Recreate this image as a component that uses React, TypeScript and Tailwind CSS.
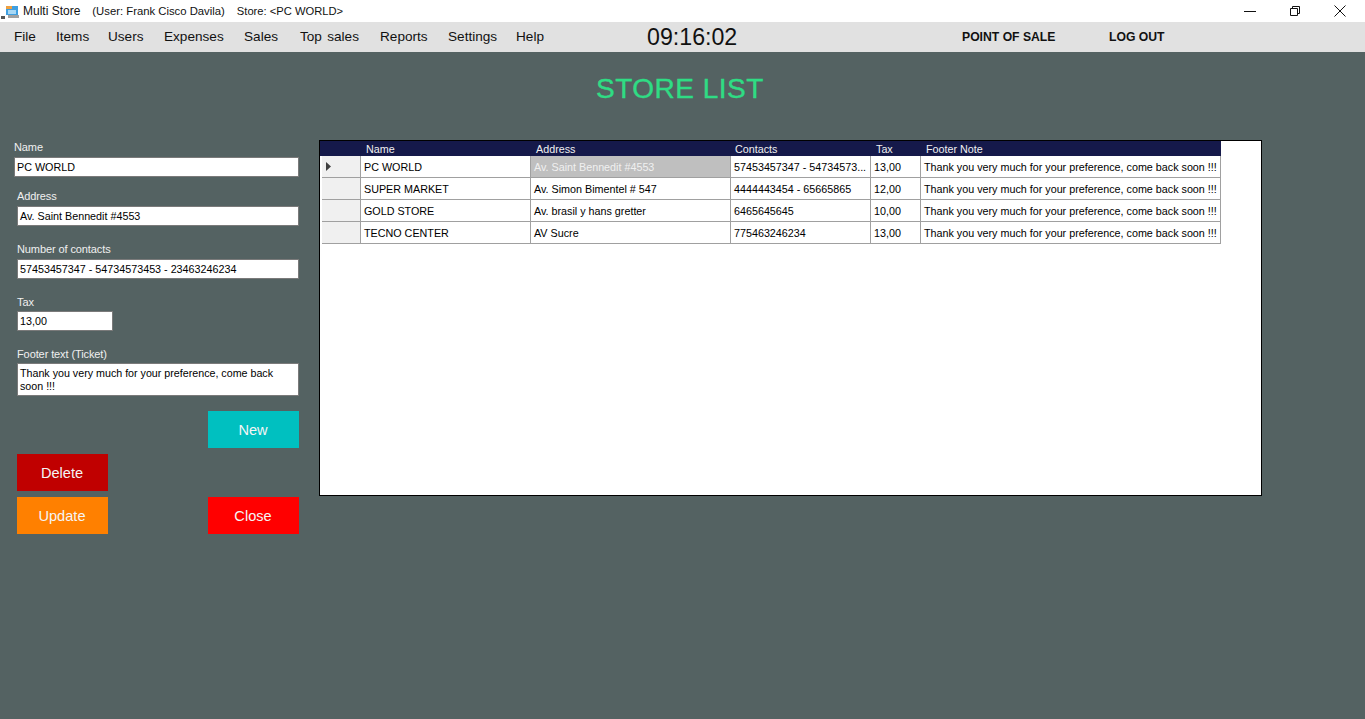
import React from "react";

const menus = [
  { label: "File", w: "w-[42px]" },
  { label: "Items", w: "w-[52px]" },
  { label: "Users", w: "w-[56px]" },
  { label: "Expenses", w: "w-[80px]" },
  { label: "Sales", w: "w-[56px]" },
  { label: "Top sales", w: "w-[80px] [word-spacing:1.5px]" },
  { label: "Reports", w: "w-[68px]" },
  { label: "Settings", w: "w-[68px]" },
  { label: "Help", w: "w-[32px]" },
];

const note = "Thank you very much for your preference, come back soon !!!";

const stores = [
  { name: "PC WORLD", address: "Av. Saint Bennedit #4553", contacts: "57453457347 - 54734573...", tax: "13,00" },
  { name: "SUPER MARKET", address: "Av. Simon Bimentel # 547", contacts: "4444443454 - 65665865", tax: "12,00" },
  { name: "GOLD STORE", address: "Av. brasil y hans gretter", contacts: "6465645645", tax: "10,00" },
  { name: "TECNO CENTER", address: "AV Sucre", contacts: "775463246234", tax: "13,00" },
];

// every grid cell draws its own bottom and right line
const cell = "border-r border-b border-[#a0a0a0] pl-[3px]";

function Field({ label, value, className, box = "", gap = "mt-[2px]" }: { label: string; value: string; className: string; box?: string; gap?: string }) {
  return (
    <div className={className}>
      <div className="h-[15px] text-[11px] leading-[15px] tracking-[-0.1px] text-[#f0f0f0]">{label}</div>
      <div className={`h-[20px] border border-[#7a7a7a] bg-white px-[2px] text-[10.75px] leading-[18px] whitespace-nowrap text-black ${gap} ${box}`}>
        {value}
      </div>
    </div>
  );
}

function ActionButton({ label, color }: { label: string; color: string }) {
  return (
    <div className={`flex h-[37px] w-[91px] items-center justify-center pt-[2px] pr-[1px] text-[14.6px] text-[#f5f5f5] ${color}`}>{label}</div>
  );
}

export default function App() {
  return (
    <div className="flex h-[719px] w-[1365px] flex-col overflow-hidden bg-[#546262] font-['Liberation_Sans',Arial,sans-serif]">
      {/* title bar */}
      <div className="flex h-[22px] items-center bg-white">
        <svg width="18" height="18" viewBox="0 0 18 18" className="ml-[1px]">
          <rect x="5" y="4" width="12" height="9" fill="#3f9fe0" />
          <rect x="5" y="4" width="6" height="3" fill="#f0a040" />
          <rect x="7" y="8" width="8" height="4" fill="#a8d8f5" />
          <rect x="7" y="13" width="11" height="3" fill="#a0a0a0" />
          <rect x="0" y="14" width="4" height="3" fill="#555555" />
        </svg>
        <span className="ml-[4px] text-[12px] text-[#111]">Multi Store</span>
        <span className="ml-[12px] text-[11.3px] text-[#111]">(User: Frank Cisco Davila)</span>
        <span className="ml-[12px] text-[11.2px] text-[#111]">Store: &lt;PC WORLD&gt;</span>
        <div className="ml-auto flex items-center">
          <svg width="12" height="12" viewBox="0 0 12 12" className="mr-[33px]">
            <path d="M0 6.5h12" stroke="#111" strokeWidth="1" />
          </svg>
          <svg width="12" height="12" viewBox="0 0 12 12" className="mr-[33px]">
            <path d="M1.5 3.5h7v7h-7zM3.5 3.5v-2h7v7h-2" fill="none" stroke="#111" strokeWidth="1" />
          </svg>
          <svg width="12" height="12" viewBox="0 0 12 12" className="mr-[19px]">
            <path d="M.5.5l11 11M11.5.5l-11 11" stroke="#111" strokeWidth="1" />
          </svg>
        </div>
      </div>

      {/* menu bar */}
      <div className="flex h-[30px] items-center bg-[#e1e1e1] pl-[14px] text-[13.6px] whitespace-nowrap text-[#111]">
        <div className="flex">
          {menus.map((m) => (
            <div key={m.label} className={m.w}>{m.label}</div>
          ))}
        </div>
        <div className="ml-[99px] w-[91px] text-[23.2px]">09:16:02</div>
        <div className="ml-[224px] w-[94px] text-[12.2px] font-bold">POINT OF SALE</div>
        <div className="ml-[53px] text-[12.2px] font-bold">LOG OUT</div>
      </div>

      <div className="mt-[21px] pl-[596px] text-[28px] leading-[32px] tracking-[0.5px] text-[#2fdc84] [-webkit-text-stroke:0.4px_#2fdc84]">
        STORE LIST
      </div>

      <div className="mt-[35px] flex items-start">
        {/* form */}
        <div className="ml-[14px] flex w-[285px] flex-col">
          <Field label="Name" value="PC WORLD" className="" />
          <Field label="Address" value="Av. Saint Bennedit #4553" className="mt-[12px] pl-[3px]" />
          <Field label="Number of contacts" value="57453457347 - 54734573453 - 23463246234" className="mt-[16px] pl-[3px]" />
          <Field label="Tax" value="13,00" className="mt-[16px] pl-[3px]" box="w-[96px]" gap="mt-[1px]" />
          <div className="mt-[16px] pl-[3px]">
            <div className="h-[15px] text-[11px] leading-[15px] tracking-[-0.1px] text-[#f0f0f0]">Footer text (Ticket)</div>
            <div className="mt-[1px] h-[33px] border border-[#7a7a7a] bg-white px-[2px] pt-[3px] text-[10.7px] leading-[13px] whitespace-nowrap text-black">
              Thank you very much for your preference, come back
              <br />
              soon !!!
            </div>
          </div>
          <div className="mt-[15px] flex justify-end">
            <ActionButton label="New" color="bg-[#00c0c0]" />
          </div>
          <div className="mt-[6px] pl-[3px]">
            <ActionButton label="Delete" color="bg-[#c00000]" />
          </div>
          <div className="mt-[6px] flex justify-between pl-[3px]">
            <ActionButton label="Update" color="bg-[#ff8000]" />
            <ActionButton label="Close" color="bg-[#ff0000]" />
          </div>
        </div>

        {/* grid */}
        <div className="ml-[20px] h-[356px] w-[943px] border border-black bg-white">
          <div className="w-[901px]">
            <div className="flex h-[15px] bg-[#15194a] text-[10.75px] leading-[17px] whitespace-nowrap text-[#f0f0f0]">
              <div className="w-[41px]" />
              <div className="w-[170px] pl-[5px]">Name</div>
              <div className="w-[200px] pl-[5px]">Address</div>
              <div className="w-[140px] pl-[4px]">Contacts</div>
              <div className="w-[50px] pl-[5px]">Tax</div>
              <div className="flex-1 pl-[5px]">Footer Note</div>
            </div>
            {stores.map((s, i) => (
              <div key={s.name} className="flex h-[22px] text-[10.75px] leading-[22px] whitespace-nowrap text-black">
                <div className="ml-[2px] flex w-[39px] items-center border-r border-b border-[#a0a0a0] bg-[#f0f0f0] pl-[4px]">
                  {i === 0 && (
                    <svg width="5" height="9" viewBox="0 0 5 9">
                      <path d="M0 0l5 4.5L0 9z" fill="#404040" />
                    </svg>
                  )}
                </div>
                <div className={`w-[170px] ${cell}`}>{s.name}</div>
                <div className={`w-[200px] ${cell} ${i === 0 ? "bg-[#bfbfbf] text-[#f0f0f0]" : ""}`}>
                  {s.address}
                </div>
                <div className={`w-[140px] ${cell}`}>{s.contacts}</div>
                <div className={`w-[50px] ${cell}`}>{s.tax}</div>
                <div className={`flex-1 ${cell}`}>{note}</div>
              </div>
            ))}
          </div>
        </div>
      </div>
    </div>
  );
}
